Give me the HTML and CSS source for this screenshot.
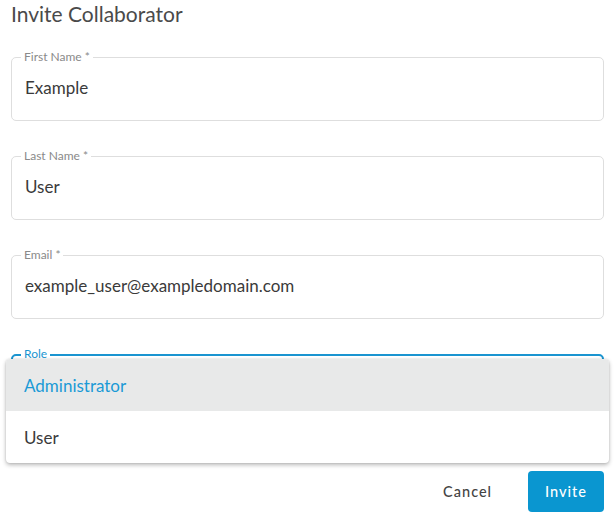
FILE: index.html
```html
<!DOCTYPE html>
<html>
<head>
<meta charset="utf-8">
<link rel="stylesheet" href="styles.css">
</head>
<body>
<div class="dialog">
  <h1 class="title">Invite Collaborator</h1>
  <div class="fields">
    <div class="field">
      <span class="label">First Name *</span>
      <span class="value">Example</span>
    </div>
    <div class="field">
      <span class="label">Last Name *</span>
      <span class="value">User</span>
    </div>
    <div class="field">
      <span class="label">Email *</span>
      <span class="value">example_user@exampledomain.com</span>
    </div>
    <div class="field focused">
      <span class="label">Role</span>
      <span class="value"></span>
      <ul class="menu">
        <li class="item selected">Administrator</li>
        <li class="item">User</li>
      </ul>
    </div>
  </div>
  <div class="actions">
    <button class="btn btn-text">Cancel</button>
    <button class="btn btn-primary">Invite</button>
  </div>
</div>
</body>
</html>
```
FILE: styles.css
```css
* { box-sizing: border-box; }
body {
  margin: 0;
  background: #fff;
  font-family: Lato, "Noto Sans", sans-serif;
  color: #333;
}
.dialog {
  padding: 0 10px 0 11px;
}
.title {
  margin: 0;
  padding-top: 0;
  font-size: 21px;
  line-height: 27px;
  font-weight: 400;
  color: #4a4a4a;
}
.fields {
  display: flex;
  flex-direction: column;
  gap: 35px;
  margin-top: 30px;
}
.field {
  position: relative;
  height: 64px;
  border: 1px solid #dedede;
  border-radius: 5px;
  display: flex;
  align-items: center;
  padding: 0 13px;
}
.label {
  position: absolute;
  top: -8px;
  left: 9px;
  padding: 0 3px;
  background: #fff;
  font-size: 12px;
  line-height: 14px;
  color: #8a8a8a;
}
.value {
  font-size: 17px;
  color: #3a3a3a;
  margin-top: -4px;
}
.field.focused {
  border: 2px solid #1a94d0;
}
.field.focused .label {
  color: #1a94d0;
  top: -9px;
  left: 8px;
}
.menu {
  position: absolute;
  top: 3px;
  left: -7px;
  right: -7px;
  margin: 0;
  padding: 0;
  list-style: none;
  background: #fff;
  border-radius: 4px;
  box-shadow: 0 2px 4px rgba(0,0,0,0.28), 0 0 2px rgba(0,0,0,0.12);
  overflow: hidden;
  z-index: 2;
}
.item {
  height: 52px;
  display: flex;
  align-items: center;
  padding: 0 18px;
  font-size: 17px;
  color: #3a3a3a;
}
.item.selected {
  background: #e8e9e9;
  color: #1a9ad6;
}
.actions {
  display: flex;
  justify-content: flex-end;
  gap: 19px;
  margin-top: 53px;
}
.btn {
  height: 41px;
  padding: 0 17px;
  border: none;
  border-radius: 4px;
  font-family: inherit;
  font-size: 14.5px;
  letter-spacing: 1px;
  font-weight: 500;
  cursor: pointer;
}
.btn-text {
  background: transparent;
  color: #444;
}
.btn-primary {
  background: #0a96d0;
  color: #fff;
}
```
